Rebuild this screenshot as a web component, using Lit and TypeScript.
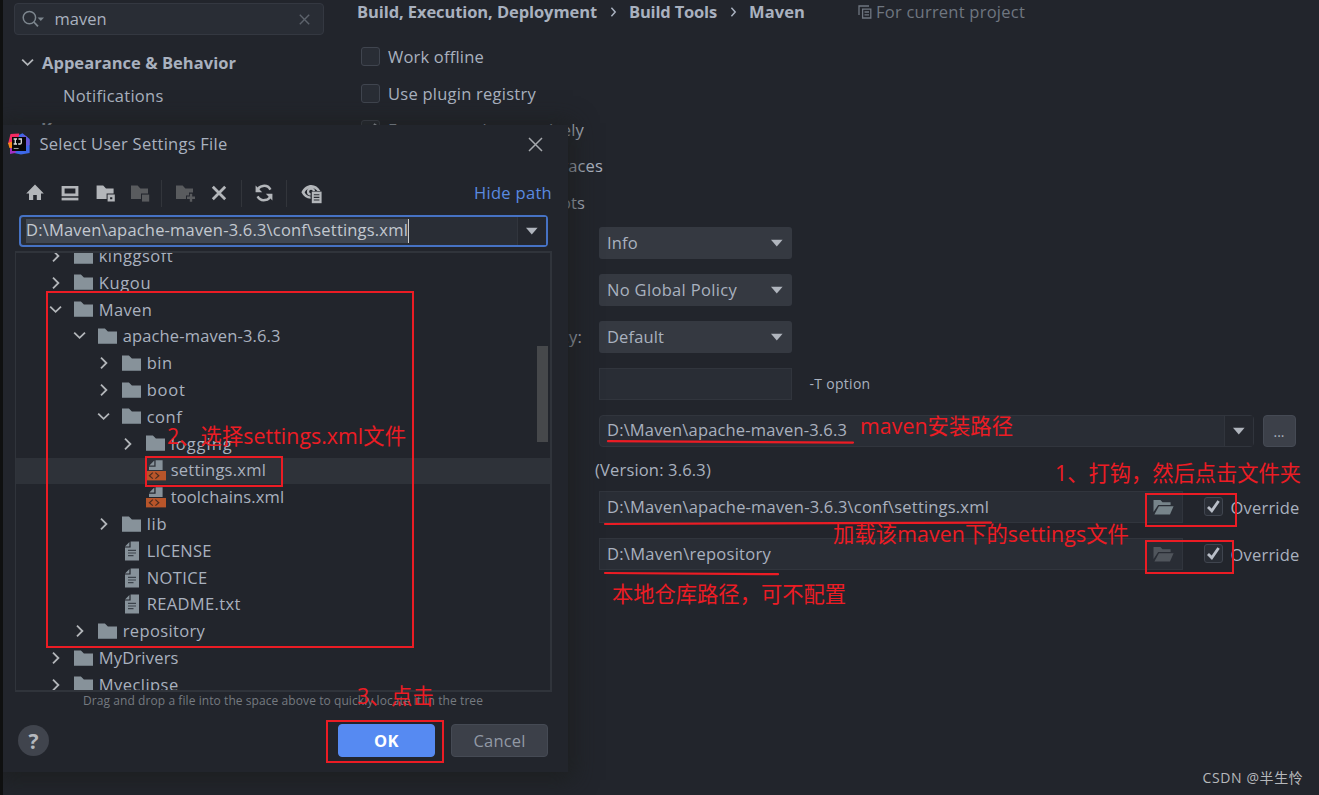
import { LitElement, html, css, svg, nothing } from "lit";
import { customElement, property } from "lit/decorators.js";
import { styleMap } from "lit/directives/style-map.js";

/** Text run tracked so that it occupies a given width. */
@customElement("fit-label")
class FitLabel extends LitElement {
  @property() text = "";
  @property({ type: Number }) w = 0;
  static styles = css`
    :host { display: inline-block; white-space: pre; font-variant-ligatures: none; flex: none; }
  `;
  firstUpdated() {
    const span = this.renderRoot.querySelector("span")!;
    const natural = span.getBoundingClientRect().width;
    const count = Array.from(this.text).length;
    if (this.w && count) span.style.letterSpacing = `${(this.w - natural) / count}px`;
  }
  render() {
    return html`<span>${this.text}</span>`;
  }
}

const label = (text: string, w: number) => html`<fit-label .text=${text} .w=${w}></fit-label>`;

const chevron = (open: boolean) => html`<svg class="chev" width="14" height="14" viewBox="0 0 14 14">
  <path d=${open ? "M1.2 3.6L6.6 8.8L12 3.6" : "M4 1.6L9.4 7L4 12.4"} fill="none" stroke="#b3b6ba" stroke-width="1.8"/></svg>`;

const folder = html`<svg width="20" height="17" viewBox="0 0 20 17"><path d="M0 .6H6.9L9.9 3.6H19V15.8H0Z" fill="#87929a"/></svg>`;
const doc = html`<svg width="20" height="20" viewBox="0 0 20 20">
  <path d="M8.6 .6H17V19.4H3V6.6H8.6Z M7.4 1V5.4H3Z" fill="#87929a"/>
  <path d="M6 9.4H14M6 12H14M6 14.6H11.5" stroke="#3c434b" stroke-width="1.2"/></svg>`;
const xml = html`<svg width="20" height="20" viewBox="0 0 20 20">
  <path d="M9.6 .2H16.6V10H3V6.8H9.6Z M8.3 .6V5.4H3.4Z" fill="#87929a"/>
  <path d="M0 11H20V20.4H0Z" fill="#b8552a"/>
  <path d="M6.8 12.6L3.4 15.7L6.8 18.6M9.4 12.6L12.8 15.7L9.4 18.6" fill="none" stroke="#4a2c1f" stroke-width="1.2"/></svg>`;
const openFolder = (color: string) => html`<svg width="21" height="17" viewBox="0 0 21 17">
  <path d="M-.5 14V2H6.4L8.5 4.3H16.6V6.9H4.2Z" fill=${color}/><path d="M4.9 8.2H19.6L16 16.6H.4Z" fill=${color}/></svg>`;
const arrow = html`<svg width="12" height="8" viewBox="0 0 12 8"><path d="M0 .8H11.6L5.8 7.6Z" fill="#b0b5bd"/></svg>`;

const toolIcons: Record<string, unknown> = {
  home: svg`<path d="M10 1.6L18.8 10.4H16V17H11.8V12H8.2V17H4V10.4H1.2Z" fill="#b3b6ba"/>`,
  desktop: svg`<path d="M1.6 3H18.4V13.2H1.6Z M4.6 5.6V10.6H15.4V5.6Z" fill="#b3b6ba" fill-rule="evenodd"/><path d="M1.6 14.7H18.4V17.4H1.6Z" fill="#b3b6ba"/>`,
  project: svg`<path d="M1.6 2.6H8.2L11 5.4H18.6V10.6H11.6V16H1.6Z" fill="#b3b6ba"/><path d="M12.6 11.6H19.8V18.6H12.6Z M15.1 14.2V16.2H17.3V14.2Z" fill="#b3b6ba" fill-rule="evenodd"/>`,
  module: svg`<path d="M1 2.6H7.6L10.4 5.4H18V10.6H11V16H1Z" fill="#595b5e"/><path d="M12 11.6H19.2V18.6H12Z" fill="#595b5e"/>`,
  create: svg`<path d="M1 2.6H7.6L10.4 5.4H18V9.6H14V12.6H11V16H1Z" fill="#595b5e"/><path d="M14.8 10.8H17.2V13.6H20V16H17.2V18.8H14.8V16H12V13.6H14.8Z" fill="#595b5e"/>`,
  remove: svg`<path d="M3.8 3.8L16.2 16.2M16.2 3.8L3.8 16.2" stroke="#b3b6ba" stroke-width="2.8"/>`,
  refresh: svg`<path d="M3 8.6A7.2 7.2 0 0 1 16.4 6.6M17 11.4A7.2 7.2 0 0 1 3.6 13.4" fill="none" stroke="#b3b6ba" stroke-width="2.5"/><path d="M1.6 2.6V9.2H8.2Z M18.4 17.4V10.8H11.8Z" fill="#b3b6ba"/>`,
  eye: svg`<path d="M.4 9.2C4.8 -.2 15.2 -.2 19.4 8H16.4C13 3.8 7 3.8 3.6 9.2C4.8 11.8 7 13.2 9.6 13.4V15.8C5.6 15.4 2.4 13.2 .4 9.2Z" fill="#b3b6ba"/><path d="M13 8.2A3 3 0 1 0 9.6 11.6" fill="none" stroke="#b3b6ba" stroke-width="2.2"/><path d="M10.8 8.6H20.6V20.2H10.8Z" fill="#b3b6ba"/><path d="M12.8 11.8H18.4M12.8 14.4H18.4M12.8 17H18.4" stroke="#2a2d33" stroke-width="1.1"/>`,
};

type Node = [depth: number, kind: "f" | "d" | "x", open: boolean, name: string, w: number];
const tree: Node[] = [
  [0, "f", false, "kinggsoft", 74.5], [0, "f", false, "Kugou", 52.5], [0, "f", true, "Maven", 53.5],
  [1, "f", true, "apache-maven-3.6.3", 158], [2, "f", false, "bin", 26], [2, "f", false, "boot", 39],
  [2, "f", true, "conf", 35.5], [3, "f", false, "logging", 62], [3, "x", false, "settings.xml", 95.5],
  [3, "x", false, "toolchains.xml", 113.5], [2, "f", false, "lib", 20.5], [2, "d", false, "LICENSE", 65],
  [2, "d", false, "NOTICE", 61], [2, "d", false, "README.txt", 94], [1, "f", false, "repository", 82.5],
  [0, "f", false, "MyDrivers", 80], [0, "f", false, "Myeclipse", 80],
];

@customElement("check-box")
class CheckBox extends LitElement {
  @property({ type: Boolean }) checked = false;
  static styles = css`
    :host { display: block; flex: none; width: 19px; height: 19px; box-sizing: border-box; border: 1px solid #40454f; border-radius: 3px; background: #292d35; }
    svg { display: block; }
  `;
  render() {
    return this.checked
      ? html`<svg width="17" height="17" viewBox="0 0 17 17"><path d="M3 9L6.8 12.8L13.6 3" fill="none" stroke="#b9bec8" stroke-width="2.8"/></svg>`
      : nothing;
  }
}

@customElement("file-dialog")
class FileDialog extends LitElement {
  static styles = css`
    :host { display: flex; flex-direction: column; box-sizing: border-box; width: 565px; height: 647px; background: #22252c; box-shadow: 0 3px 22px 5px rgba(28, 31, 30, 0.85); color: #a9b1bf; font-size: 16.5px; }
    svg { display: block; flex: none; overflow: visible; }
    .title { display: flex; align-items: center; height: 38px; padding: 0 25px 0 5px; }
    .title fit-label { margin-left: 9.5px; flex: 1; }
    .tools { display: flex; align-items: center; height: 50px; margin-top: 5px; padding: 0 16px 0 22px; }
    .tools svg { margin-right: 15px; }
    .tools i { width: 1px; height: 27px; background: #32353b; margin: 0 13px 0 -4px; }
    .tools svg.remove { margin-left: -1px; }
    .tools i.tight { margin: 0 12px 0 -3px; }
    .tools i.last { margin: 0 14px 0 -3px; }
    .tools .link { margin-left: auto; color: #5a8ae0; }
    .path { display: flex; box-sizing: border-box; height: 32px; margin: -3px 20.5px 0 16px; border: 2px solid #4672c4; border-radius: 4px; background: #292d35; align-items: center; }
    .sel { height: 24px; line-height: 22px; margin-left: 5px; background: #414853; color: #c3c8d0; border-right: 1px solid #ccc; width: 382px; }
    .drop { margin-left: auto; width: 28px; height: 28px; display: flex; align-items: center; justify-content: center; background: #24272e; border-left: 1px solid #31353d; }
    .tree { position: relative; box-sizing: border-box; height: 441px; width: 537px; margin: 4px 0 0 12px; border: solid #30343b; border-width: 2px 2px 2px 1px; overflow: hidden; flex: none; }
    .rows { margin-top: -9.8px; }
    .row { height: 26.8px; display: flex; align-items: center; box-sizing: border-box; }
    .row.on { background: #2e3239; }
    .row fit-label { line-height: 22px; margin-top: -1px; }
    .row svg { margin-top: -1px; }
    .chev, .nochev { width: 14px; flex: none; }
    .pic { margin-left: 11px; width: 24.7px; flex: none; }
    .thumb { position: absolute; right: 2px; top: 93px; width: 11px; height: 96px; background: #46484b; }
    .hint { font-size: 12px; color: #757a80; line-height: 17px; height: 17px; padding-left: 80px; }
    .foot { display: flex; align-items: center; margin: 15px 20px 0 15px; height: 33px; }
    .help { width: 31px; height: 31px; border-radius: 50%; background: #40444d; display: flex; align-items: center; justify-content: center; font-size: 21px; font-weight: 700; color: #b5b8bd; margin-right: auto; }
    .btn { display: flex; align-items: center; justify-content: center; box-sizing: border-box; width: 97px; height: 33px; border-radius: 4px; background: #3c4049; border: 1px solid #454a54; margin-left: 16px; color: #9299a5; }
    .btn.ok { background: #568af2; border-color: #568af2; color: #fff; font-weight: 700; }
  `;
  tool(name: string) {
    return html`<svg class=${name} width="20" height="20" viewBox="0 0 20 20">${toolIcons[name]}</svg>`;
  }
  render() {
    return html`
      <div class="title">
        <svg width="22" height="22" viewBox="0 0 22 22">
          <path d="M2.5 1L11 .4L13 10L0 11Z" fill="#f42a62"/><path d="M0 10L6 8V16L1.5 15Z" fill="#f98a1b"/>
          <path d="M11 2L14.5 .2L21.6 6V20L13 21.5L6 20L8 14Z" fill="#3d68e8"/><path d="M14 2L18 3L21.6 7V12L14 14Z" fill="#6957d8"/><path d="M2 15L10 16L7 20L2 21Z" fill="#a22fc0"/>
          <path d="M4 4H18V18H4Z" fill="#060608"/>
          <path d="M5.6 6H9M7.3 6V11M5.6 11H9M10.5 6H13.3V9.6Q13.3 11.2 11.6 11H10.2" fill="none" stroke="#ddd" stroke-width="1.3"/><path d="M5.7 15.5H10.6" stroke="#999" stroke-width="1.1"/>
        </svg>
        ${label("Select User Settings File", 188)}
        <svg width="15" height="15" viewBox="0 0 15 15"><path d="M1 1L14 14M14 1L1 14" stroke="#a6a9ad" stroke-width="1.5"/></svg>
      </div>
      <div class="tools">
        ${this.tool("home")}${this.tool("desktop")}${this.tool("project")}${this.tool("module")}<i></i>
        ${this.tool("create")}${this.tool("remove")}<i class="tight"></i>${this.tool("refresh")}<i class="last"></i>${this.tool("eye")}
        <span class="link">${label("Hide path", 78)}</span>
      </div>
      <div class="path">
        <div class="sel">${label("D:\\Maven\\apache-maven-3.6.3\\conf\\settings.xml", 382)}</div>
        <div class="drop">${arrow}</div>
      </div>
      <div class="tree">
        <div class="rows">
          ${tree.map(([depth, kind, open, name, w]) => html`
            <div class="row ${name === "settings.xml" ? "on" : ""}" style=${styleMap({ paddingLeft: `${33 + depth * 24}px` })}>
              ${kind === "f" ? chevron(open) : html`<span class="nochev"></span>`}
              <span class="pic">${kind === "f" ? folder : kind === "d" ? doc : xml}</span>
              ${label(name, w)}
            </div>`)}
        </div>
        <div class="thumb"></div>
      </div>
      <div class="hint">${label("Drag and drop a file into the space above to quickly locate it in the tree", 400)}</div>
      <div class="foot">
        <div class="help">?</div>
        <div class="btn ok">${label("OK", 25)}</div>
        <div class="btn">${label("Cancel", 52)}</div>
      </div>`;
  }
}

type Box = [x: number, y: number, w: number, h: number];
const boxes: Box[] = [[46, 291, 368, 357], [145, 456, 138, 31], [326, 720, 118, 43], [1145, 493, 92, 34], [1145, 540, 89, 34]];
const notes: [x: number, y: number, text: string, w: number][] = [
  [167, 436, "2、选择settings.xml文件", 239], [860, 426, "maven安装路径", 153], [1055, 473, "1、打钩，然后点击文件夹", 246],
  [833, 534, "加载该maven下的settings文件", 296], [612, 594, "本地仓库路径，可不配置", 234], [357, 696, "3、点击", 77],
];

@customElement("app-root")
class AppRoot extends LitElement {
  static styles = css`
    :host { display: block; position: relative; box-sizing: border-box; width: 1319px; height: 795px; overflow: hidden; background: #22252c; border-left: 3px solid #0f1010; color: #a9b1bf; font: 16.5px/22px "Open Sans", "Noto Sans", "Noto Sans CJK SC", sans-serif; }
    svg { display: block; flex: none; overflow: visible; }
    .page { display: grid; grid-template-columns: 354px 1fr; }
    .search { display: flex; align-items: center; box-sizing: border-box; margin: 3px 0 0 11px; width: 310px; height: 32px; border: 1px solid #343841; border-radius: 4px; background: #292d35; padding: 0 13px 0 7px; }
    .search fit-label { margin: 0 auto 0 9.5px; }
    .node { display: flex; align-items: center; height: 33px; padding-left: 18px; font-weight: 700; }
    .node fit-label { margin-left: 7px; }
    .node.first { margin-top: 11px; }
    .node.leaf { font-weight: 400; padding-left: 53px; }
    .node.next { padding-left: 31px; }
    .crumbs { display: flex; align-items: center; height: 23px; font-weight: 700; }
    .crumbs .sep { margin: 0 12px 0 13px; }
    .scope { display: flex; align-items: center; gap: 4px; margin-left: 53px; font-weight: 400; color: #6f7680; }
    .checks { padding: 16px 0 0 4px; }
    .check { display: flex; align-items: center; height: 36.4px; gap: 8px; }
    .check check-box { margin-top: -1px; }
    .form { display: flex; flex-direction: column; gap: 15px; padding: 6px 0 0 0; }
    .line { display: flex; align-items: center; height: 32px; }
    .cap { width: 225px; margin-right: 17px; text-align: right; flex: none; }
    .select, .input { box-sizing: border-box; width: 192.5px; height: 32px; border-radius: 3px; background: #353941; display: flex; align-items: center; justify-content: space-between; padding: 0 9px 0 8px; }
    .select fit-label { margin-top: 1px; }
    .input { background: #292d35; border: 1px solid #31353d; border-radius: 0; padding: 0 7px; }
    .small { font-size: 14px; margin-left: 18px; }
    .home { width: 655px; border-radius: 4px; padding-right: 0; }
    .home fit-label { margin-top: -2px; }
    .drop { width: 28px; height: 30px; display: flex; align-items: center; justify-content: center; background: #24272e; border-left: 1px solid #31353d; }
    .more { box-sizing: border-box; width: 33px; height: 32px; margin-left: 8.5px; border-radius: 4px; background: #3c4049; border: 1px solid #454a54; text-align: center; line-height: 31px; font-size: 14px; }
    .version { padding-left: 238px; height: 22px; margin: -3px 0 -5px; line-height: 21px; }
    .file { width: 584px; }
    .line.over check-box { margin: -1px 8px 0 20.5px; }
    .line.over > fit-label { margin-top: 2px; }
    .mark { position: absolute; box-sizing: border-box; border: 2px solid #ec1c24; }
    .note { position: absolute; color: #ec1c24; font-size: 21.3px; line-height: 30px; font-family: "Open Sans", "Noto Sans CJK SC", sans-serif; }
    .strokes { position: absolute; left: -3px; top: 0; }
    .dialog { position: absolute; left: 0; top: 125px; }
    .water { position: absolute; right: 15.5px; bottom: 7px; font-size: 14px; line-height: 20px; color: #b6b8bb; }
  `;
  select(text: string, w: number) {
    return html`<div class="select">${label(text, w)}${arrow}</div>`;
  }
  render() {
    const sep = html`<svg class="sep" width="7" height="10" viewBox="0 0 7 10"><path d="M1.4 .8L5.2 5L1.4 9.2" fill="none" stroke="#a9b1bf" stroke-width="1.5"/></svg>`;
    return html`
      <div class="page">
        <div>
          <div class="search">
            <svg width="23" height="18" viewBox="0 0 23 18"><circle cx="7.4" cy="7.6" r="6.2" fill="none" stroke="#7d868e" stroke-width="1.5"/><path d="M11.8 12L16 16.4" stroke="#7d868e" stroke-width="1.8"/><path d="M15.6 7.4H22L18.8 11Z" fill="#7d868e"/></svg>
            ${label("maven", 52)}
            <svg width="11" height="11" viewBox="0 0 11 11"><path d="M.8 .8L10.2 10.2M10.2 .8L.8 10.2" stroke="#5d636c" stroke-width="1.4"/></svg>
          </div>
          <div class="node first">${chevron(true)}${label("Appearance & Behavior", 194)}</div>
          <div class="node leaf">${label("Notifications", 100.5)}</div>
          <div class="node next">${label("Keymap", 63)}</div>
        </div>
        <div>
          <div class="crumbs">
            ${label("Build, Execution, Deployment", 240)}${sep}${label("Build Tools", 88)}${sep}${label("Maven", 56)}
            <span class="scope">
              <svg width="14" height="14" viewBox="0 0 14 14"><path d="M1 10V1H11M4.6 4.2H12.8V13H4.6ZM6.5 7H11M6.5 9.8H11" fill="none" stroke="#6f7680" stroke-width="1.3"/></svg>
              ${label("For current project", 149)}
            </span>
          </div>
          <div class="checks">
            <div class="check"><check-box></check-box>${label("Work offline", 96)}</div>
            <div class="check"><check-box></check-box>${label("Use plugin registry", 148)}</div>
            <div class="check"><check-box checked></check-box>${label("Execute goals recursively", 196)}</div>
            <div class="check"><check-box></check-box>${label("Print exception stack traces", 215)}</div>
            <div class="check"><check-box></check-box>${label("Always update snapshots", 197)}</div>
          </div>
          <div class="form">
            <div class="line"><span class="cap"></span>${this.select("Info", 31)}</div>
            <div class="line"><span class="cap"></span>${this.select("No Global Policy", 130)}</div>
            <div class="line"><span class="cap">${label("Multiproject build fail policy:", 223)}</span>${this.select("Default", 57)}</div>
            <div class="line"><span class="cap"></span><div class="input"></div><span class="small">${label("-T option", 61)}</span></div>
            <div class="line"><span class="cap"></span><div class="input home">${label("D:\\Maven\\apache-maven-3.6.3", 240)}<span class="drop">${arrow}</span></div><div class="more">...</div></div>
            <div class="version">${label("(Version: 3.6.3)", 116)}</div>
            <div class="line over"><span class="cap"></span><div class="input file">${label("D:\\Maven\\apache-maven-3.6.3\\conf\\settings.xml", 382)}${openFolder("#77848a")}</div><check-box checked></check-box>${label("Override", 69)}</div>
            <div class="line over"><span class="cap"></span><div class="input file">${label("D:\\Maven\\repository", 164)}${openFolder("#50555c")}</div><check-box checked></check-box>${label("Override", 69)}</div>
          </div>
        </div>
      </div>
      <file-dialog class="dialog"></file-dialog>
      ${boxes.map(([x, y, w, h]) => html`<div class="mark" style=${styleMap({ left: `${x - 3}px`, top: `${y}px`, width: `${w}px`, height: `${h}px` })}></div>`)}
      <svg class="strokes" width="1319" height="795" viewBox="0 0 1319 795">
        <path d="M608 441.2L853 442.6M605 524L991 522.6M605 573L778 574.2" fill="none" stroke="#ec1c24" stroke-width="2.2" stroke-linecap="round"/>
      </svg>
      ${notes.map(([x, y, text, w]) => html`<div class="note" style=${styleMap({ left: `${x - 3}px`, top: `${y - 15}px` })}>${label(text, w)}</div>`)}
      <div class="water">${label("CSDN @半生怜", 101)}</div>`;
  }
}
